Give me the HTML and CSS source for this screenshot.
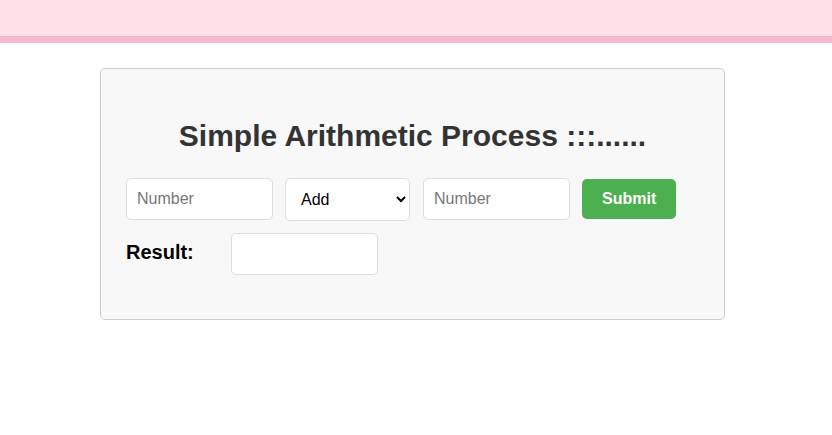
FILE: index.html
```html
<!DOCTYPE html>
<html>
<head>
<meta charset="utf-8">
<link rel="stylesheet" href="styles.css">
</head>
<body>
<header class="topbar"></header>
<div class="stripe"></div>
<main class="card">
  <h2 class="title">Simple Arithmetic Process :::......</h2>
  <div class="row top-row">
    <input class="field" type="text" placeholder="Number">
    <select class="op">
      <option>Add</option>
      <option>Subtract</option>
      <option>Multiply</option>
      <option>Divide</option>
    </select>
    <input class="field" type="text" placeholder="Number">
    <button class="submit">Submit</button>
  </div>
  <div class="row result-row">
    <label class="result-label">Result:</label>
    <input class="field" type="text">
  </div>
</main>
</body>
</html>
```
FILE: styles.css
```css
html, body {
  margin: 0;
  padding: 0;
  background: #ffffff;
  font-family: "Liberation Sans", Arial, sans-serif;
}
.topbar {
  height: 36px;
  background: #ffe0e9;
  border-bottom: 1px solid #d9c3ca;
}
.stripe {
  height: 6px;
  background: #fbb7cc;
}
.card {
  box-sizing: border-box;
  width: 625px;
  margin: 25px 0 0 100px;
  padding: 20px 25px 44px;
  background: #f8f8f8;
  border: 1px solid #cccccc;
  border-radius: 5px;
}
.title {
  margin: 30px 0 25px;
  font-size: 30px;
  line-height: 34px;
  font-weight: bold;
  color: #333333;
  text-align: center;
}
.row {
  display: flex;
  gap: 12px;
}
.top-row {
  align-items: flex-start;
}
.result-row {
  align-items: center;
  margin-top: 12px;
}
.field {
  box-sizing: border-box;
  width: 147px;
  height: 42px;
  padding: 10px;
  border: 1px solid #dddddd;
  border-radius: 5px;
  background: #ffffff;
  font-family: "Liberation Sans", Arial, sans-serif;
  font-size: 16px;
  color: #000;
  outline: none;
}
.field::placeholder {
  color: #777777;
}
.op {
  box-sizing: border-box;
  width: 125px;
  height: 43px;
  margin-right: 1px;
  padding: 10px 10px 10px 11px;
  border: 1px solid #dddddd;
  border-radius: 5px;
  background: #ffffff;
  font-family: "Liberation Sans", Arial, sans-serif;
  font-size: 16px;
  color: #000;
}
.submit {
  box-sizing: border-box;
  width: 94px;
  height: 40px;
  margin-top: 1px;
  padding: 10px 20px;
  border: none;
  border-radius: 5px;
  background: #4caf50;
  color: #ffffff;
  font-family: "Liberation Sans", Arial, sans-serif;
  font-size: 16px;
  font-weight: bold;
}
.result-label {
  width: 93px;
  margin-bottom: 3px;
  font-size: 20px;
  font-weight: bold;
  color: #000;
}
```
